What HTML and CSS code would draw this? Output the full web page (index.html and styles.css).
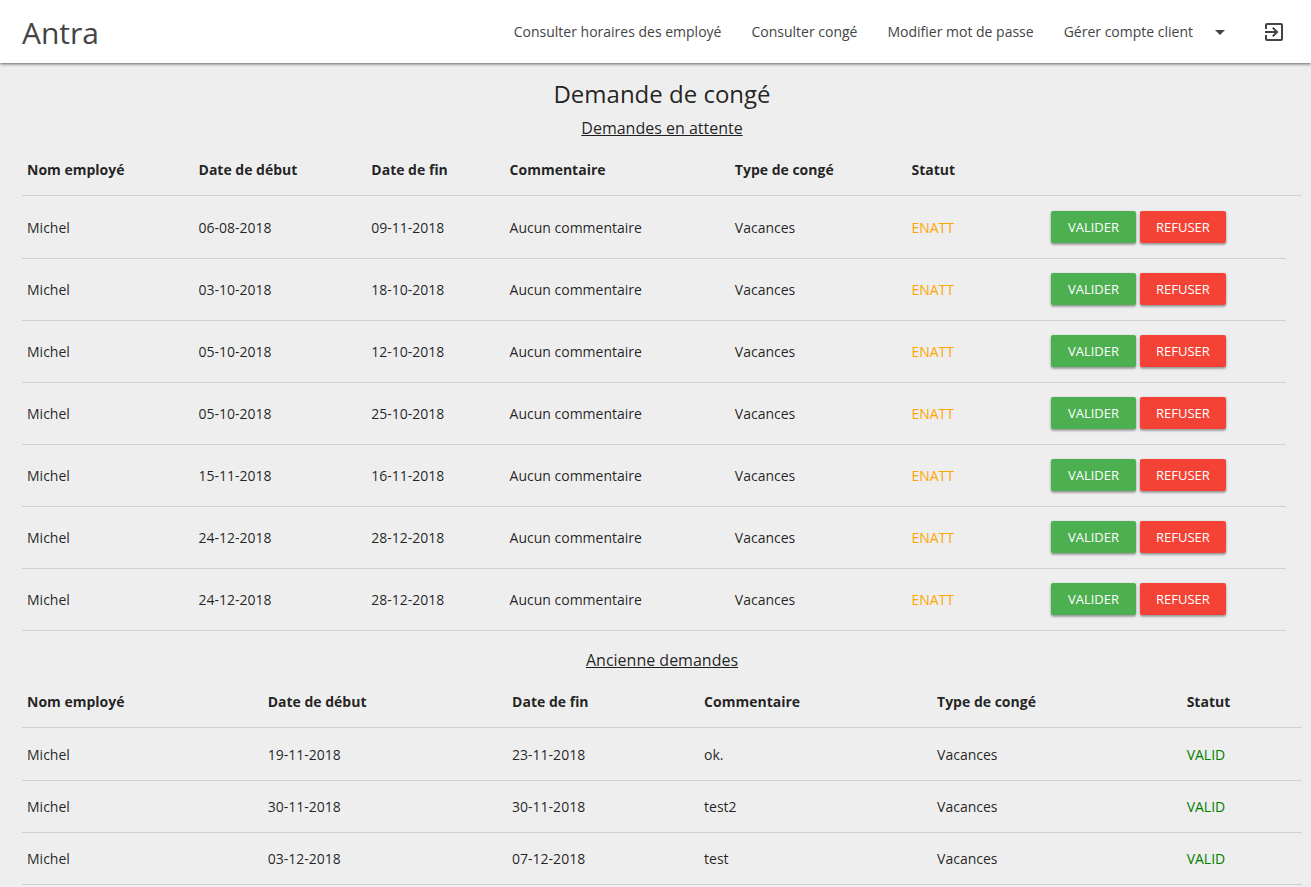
FILE: index.html
```html
<!DOCTYPE html>
<html lang="fr">
<head>
<meta charset="utf-8">
<title>Antra</title>
<link rel="stylesheet" href="styles.css">
</head>
<body>
<header class="navbar">
  <a class="brand" href="#">Antra</a>
  <nav class="menu">
    <a class="menu-link" href="#">Consulter horaires des employé</a>
    <a class="menu-link" href="#">Consulter congé</a>
    <a class="menu-link" href="#">Modifier mot de passe</a>
    <a class="menu-link" href="#">Gérer compte client
      <svg class="icon" viewBox="0 0 24 24" aria-hidden="true"><path d="M7 10l5 5 5-5z"/></svg>
    </a>
    <a class="menu-link" href="#" aria-label="Déconnexion">
      <svg class="icon" viewBox="0 0 24 24" aria-hidden="true"><path d="M10.09 15.59L11.5 17l5-5-5-5-1.41 1.41L12.67 11H3v2h9.67l-2.58 2.59zM19 3H5c-1.11 0-2 .9-2 2v4h2V5h14v14H5v-4H3v4c0 1.1.89 2 2 2h14c1.1 0 2-.9 2-2V5c0-1.1-.9-2-2-2z"/></svg>
    </a>
  </nav>
</header>
<main class="content">
  <h1 class="title">Demande de congé</h1>
  <h2 class="subtitle">Demandes en attente</h2>
  <table class="requests pending">
    <colgroup><col class="p-name"><col class="p-start"><col class="p-end"><col class="p-comment"><col class="p-type"><col class="p-status"><col><col class="p-edge"></colgroup>
    <thead>
      <tr><th>Nom employé</th><th>Date de début</th><th>Date de fin</th><th>Commentaire</th><th>Type de congé</th><th>Statut</th><th></th><th></th></tr>
    </thead>
    <tbody>
      <tr><td>Michel</td><td>06-08-2018</td><td>09-11-2018</td><td>Aucun commentaire</td><td>Vacances</td><td class="waiting">ENATT</td><td><div class="actions"><button class="btn accept">VALIDER</button><button class="btn refuse">REFUSER</button></div></td></tr>
      <tr><td>Michel</td><td>03-10-2018</td><td>18-10-2018</td><td>Aucun commentaire</td><td>Vacances</td><td class="waiting">ENATT</td><td><div class="actions"><button class="btn accept">VALIDER</button><button class="btn refuse">REFUSER</button></div></td></tr>
      <tr><td>Michel</td><td>05-10-2018</td><td>12-10-2018</td><td>Aucun commentaire</td><td>Vacances</td><td class="waiting">ENATT</td><td><div class="actions"><button class="btn accept">VALIDER</button><button class="btn refuse">REFUSER</button></div></td></tr>
      <tr><td>Michel</td><td>05-10-2018</td><td>25-10-2018</td><td>Aucun commentaire</td><td>Vacances</td><td class="waiting">ENATT</td><td><div class="actions"><button class="btn accept">VALIDER</button><button class="btn refuse">REFUSER</button></div></td></tr>
      <tr><td>Michel</td><td>15-11-2018</td><td>16-11-2018</td><td>Aucun commentaire</td><td>Vacances</td><td class="waiting">ENATT</td><td><div class="actions"><button class="btn accept">VALIDER</button><button class="btn refuse">REFUSER</button></div></td></tr>
      <tr><td>Michel</td><td>24-12-2018</td><td>28-12-2018</td><td>Aucun commentaire</td><td>Vacances</td><td class="waiting">ENATT</td><td><div class="actions"><button class="btn accept">VALIDER</button><button class="btn refuse">REFUSER</button></div></td></tr>
      <tr><td>Michel</td><td>24-12-2018</td><td>28-12-2018</td><td>Aucun commentaire</td><td>Vacances</td><td class="waiting">ENATT</td><td><div class="actions"><button class="btn accept">VALIDER</button><button class="btn refuse">REFUSER</button></div></td></tr>
    </tbody>
  </table>
  <h2 class="subtitle">Ancienne demandes</h2>
  <table class="requests">
    <colgroup><col class="a-name"><col class="a-start"><col class="a-end"><col class="a-comment"><col class="a-type"><col></colgroup>
    <thead>
      <tr><th>Nom employé</th><th>Date de début</th><th>Date de fin</th><th>Commentaire</th><th>Type de congé</th><th>Statut</th></tr>
    </thead>
    <tbody>
      <tr><td>Michel</td><td>19-11-2018</td><td>23-11-2018</td><td>ok.</td><td>Vacances</td><td class="valid">VALID</td></tr>
      <tr><td>Michel</td><td>30-11-2018</td><td>30-11-2018</td><td>test2</td><td>Vacances</td><td class="valid">VALID</td></tr>
      <tr><td>Michel</td><td>03-12-2018</td><td>07-12-2018</td><td>test</td><td>Vacances</td><td class="valid">VALID</td></tr>
    </tbody>
  </table>
</main>
</body>
</html>
```
FILE: styles.css
```css
* { box-sizing: border-box; }

body {
  margin: 0;
  background: #eee;
  color: rgba(0, 0, 0, 0.87);
  font: 14px/21px "Open Sans", "Noto Sans", sans-serif;
}

.navbar {
  display: flex;
  justify-content: space-between;
  align-items: center;
  height: 63px;
  padding: 0 25px 0 22px;
  background: #fff;
  box-shadow: 0 1px 3px rgba(0, 0, 0, 0.6);
}

.brand {
  padding-top: 2px;
  color: #444;
  font-size: 30px;
  line-height: 60px;
  text-decoration: none;
}

.menu { display: flex; gap: 30px; }

.menu-link {
  display: flex;
  align-items: center;
  gap: 15px;
  color: #444;
  text-decoration: none;
}

.icon { width: 24px; height: 24px; fill: #444; }

.content { padding: 13px 9px 0 22px; }

.title {
  margin: 0;
  font-size: 24px;
  font-weight: 400;
  line-height: 36px;
  text-align: center;
}

.subtitle {
  margin: 0;
  font-size: 16px;
  font-weight: 400;
  line-height: 32px;
  text-align: center;
  text-decoration: underline;
}

.requests {
  width: 100%;
  table-layout: fixed;
  border-collapse: collapse;
}

.pending { margin-bottom: 13px; }

.requests th,
.requests td {
  padding: 15px 5px;
  border-bottom: 1px solid #d0d0d0;
  text-align: left;
}

.requests th { font-weight: 700; }

.requests tbody tr:first-child td { padding-top: 16px; }

.pending tbody td,
.pending tbody tr:first-child td { padding: 14px 5px 15px; }

.pending tbody tr:first-child td { padding-top: 15px; }

.p-name { width: 13.4%; }
.p-start { width: 13.5%; }
.p-end { width: 10.8%; }
.p-comment { width: 17.6%; }
.p-type { width: 13.8%; }
.p-status { width: 10.9%; }
.p-edge { width: 16px; }

.a-name { width: 18.8%; }
.a-start { width: 19.1%; }
.a-end { width: 15%; }
.a-comment { width: 18.2%; }
.a-type { width: 19.5%; }

.requests .waiting { color: #ffa500; }
.requests .valid { color: #008000; }

.actions { display: flex; gap: 4px; }

.btn {
  height: 32px;
  padding: 0 16px;
  border: 0;
  border-radius: 2px;
  color: #fff;
  font: 13px/32px "Open Sans", "Noto Sans", sans-serif;
  box-shadow: 0 2px 2px rgba(0, 0, 0, 0.2), 0 1px 3px rgba(0, 0, 0, 0.25);
}

.accept { padding: 0 17px; background: #4caf50; }
.refuse { background: #f44336; }
```
